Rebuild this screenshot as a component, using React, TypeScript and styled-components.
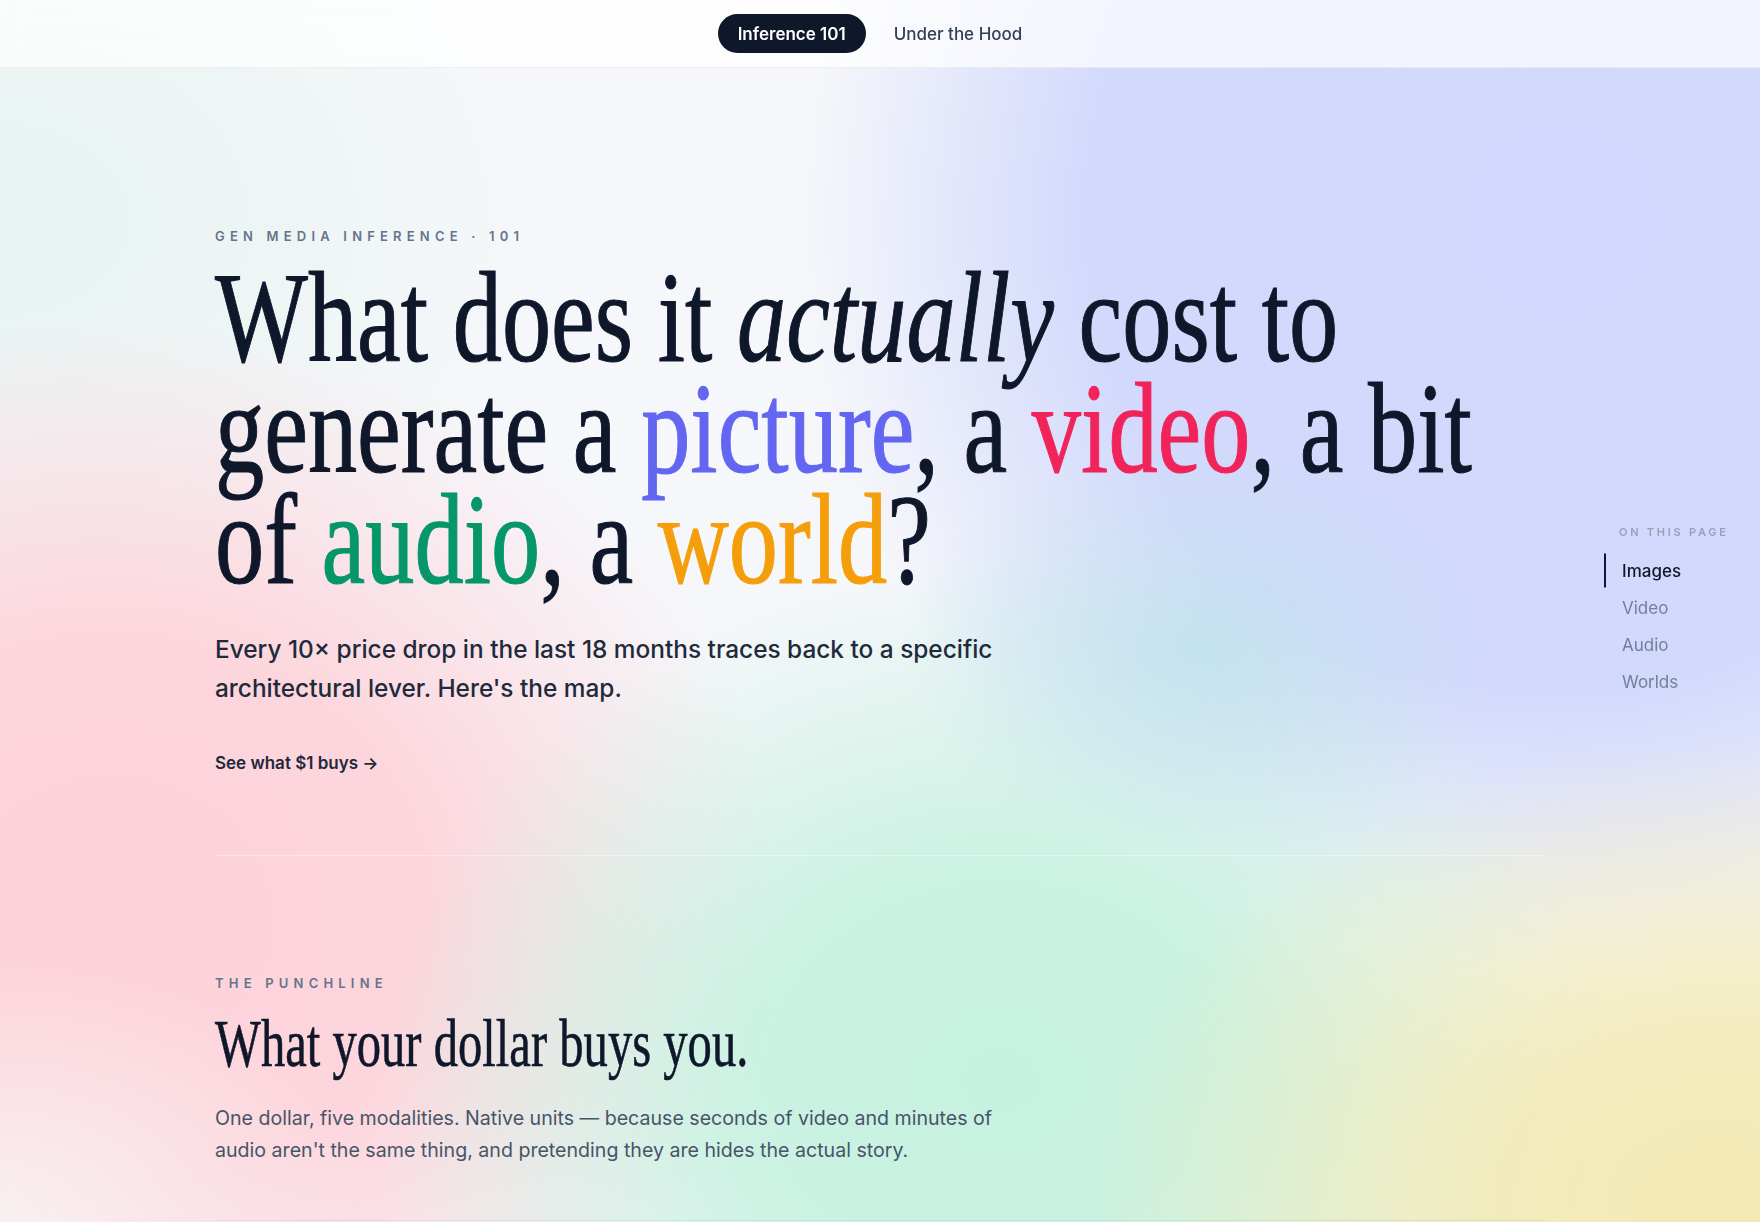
import React from "react";
import styled, { createGlobalStyle } from "styled-components";

const GlobalStyle = createGlobalStyle`
  html, body {
    margin: 0;
    padding: 0;
  }
  body {
    min-height: 100vh;
    overflow-x: hidden;
    font-family: Inter, "Noto Sans", sans-serif;
    color: #0f172a;
    background-color: #f6f7fa;
    background-attachment: fixed;
    background-image:
      radial-gradient(ellipse 380px 260px at 0px 1222px, rgba(248, 242, 242, 0.95) 0%, rgba(248, 242, 242, 0) 100%),
      radial-gradient(ellipse 300px 210px at 1200px 650px, rgba(192, 226, 238, 0.85) 0%, rgba(192, 226, 238, 0) 100%),
      radial-gradient(ellipse 640px 460px at 1720px 1200px, #f3eab3 0%, rgba(243, 234, 179, 0.85) 35%, rgba(243, 234, 179, 0) 100%),
      radial-gradient(ellipse 620px 520px at 1000px 1080px, #c6f1e0 0%, rgba(198, 241, 224, 0.9) 40%, rgba(198, 241, 224, 0) 100%),
      radial-gradient(ellipse 680px 600px at 110px 920px, #fdd3da 0%, rgba(253, 211, 218, 0.95) 45%, rgba(253, 211, 218, 0) 100%),
      radial-gradient(ellipse 760px 760px at 1560px 220px, #d2d8fd 0%, #d3d9fc 62%, rgba(211, 217, 252, 0) 100%),
      radial-gradient(ellipse 560px 420px at 0px 220px, #e6f3f0 0%, rgba(230, 243, 240, 0) 100%);
  }
`;

const modalities = ["Images", "Video", "Audio", "Worlds"];

const Nav = styled.nav`
  position: sticky;
  top: 0;
  z-index: 5;
  height: 68px;
  box-sizing: border-box;
  display: flex;
  align-items: center;
  justify-content: center;
  gap: 8px;
  background: rgba(255, 255, 255, 0.72);
  backdrop-filter: blur(12px);
  border-bottom: 1px solid rgba(15, 23, 42, 0.06);
`;

const NavPill = styled.a<{ $active?: boolean }>`
  display: inline-flex;
  align-items: center;
  height: 39px;
  padding: 0 20px;
  border-radius: 999px;
  font-size: 17px;
  font-weight: ${(p) => (p.$active ? 600 : 500)};
  color: ${(p) => (p.$active ? "#ffffff" : "#334155")};
  background: ${(p) => (p.$active ? "#0f172a" : "transparent")};
  text-decoration: none;
  cursor: pointer;
`;

const Main = styled.main`
  max-width: 1330px;
  margin: 0 auto;
`;

const Hero = styled.section`
  padding: 158px 0 80px;
  border-bottom: 1px solid rgba(255, 255, 255, 0.4);
`;

const Eyebrow = styled.div`
  font-size: 13px;
  line-height: 20px;
  font-weight: 600;
  letter-spacing: 0.4em;
  text-transform: uppercase;
  color: #64748b;
`;

const Headline = styled.h1`
  margin: 16px 0 0;
  font-family: "Liberation Serif", "Times New Roman", serif;
  font-weight: 400;
  font-size: 130px;
  line-height: 111px;
  color: #0f172a;
  white-space: nowrap;
  -webkit-text-stroke-width: 1.1px;
  transform: scaleX(0.757);
  transform-origin: left top;
`;

const Accent = styled.span<{ $color: string }>`
  color: ${(p) => p.$color};
`;

const Lede = styled.p`
  margin: 35px 0 0;
  max-width: 840px;
  font-size: 24.4px;
  line-height: 38.5px;
  font-weight: 500;
  color: #1f2a3c;
`;

const CtaLink = styled.a`
  display: inline-block;
  margin-top: 44px;
  font-size: 17px;
  line-height: 24px;
  font-weight: 600;
  color: #1e293b;
  text-decoration: none;
`;

const Section = styled.section`
  padding: 117px 0 54px;
  border-bottom: 1px solid rgba(148, 163, 184, 0.14);
`;

const SectionTitle = styled.h2`
  margin: 13px 0 0;
  font-family: "Liberation Serif", "Times New Roman", serif;
  font-weight: 400;
  font-size: 68px;
  line-height: 75px;
  color: #0f172a;
  white-space: nowrap;
  -webkit-text-stroke-width: 0.6px;
  transform: scaleX(0.715);
  transform-origin: left top;
`;

const Body = styled.p`
  margin: 22px 0 0;
  max-width: 800px;
  font-size: 19.6px;
  line-height: 31.5px;
  color: #475569;
`;

const Toc = styled.aside`
  position: fixed;
  top: 50%;
  right: 16px;
  width: 140px;
  transform: translateY(-50%);
  z-index: 4;
`;

const TocHeading = styled.div`
  margin: 0 0 14px 15px;
  font-size: 11px;
  line-height: 16px;
  font-weight: 600;
  letter-spacing: 0.25em;
  color: #94a3b8;
`;

const TocList = styled.ul`
  list-style: none;
  margin: 0;
  padding: 0;
  display: flex;
  flex-direction: column;
  gap: 3px;
`;

const TocItem = styled.li<{ $active?: boolean }>`
  padding: 5px 0 5px 16px;
  border-left: 2px solid ${(p) => (p.$active ? "#0f172a" : "transparent")};
  font-size: 17px;
  line-height: 24px;
  font-weight: ${(p) => (p.$active ? 500 : 400)};
  color: ${(p) => (p.$active ? "#0f172a" : "#718096")};
`;

export default function App() {
  return (
    <>
      <GlobalStyle />
      <Nav>
        <NavPill $active>Inference 101</NavPill>
        <NavPill>Under the Hood</NavPill>
      </Nav>

      <Main>
        <Hero>
          <Eyebrow>Gen Media Inference · 101</Eyebrow>
          <Headline>
            What does it <em>actually</em> cost to
            <br />
            generate a <Accent $color="#6366f1">picture</Accent>, a{" "}
            <Accent $color="#f0245a">video</Accent>, a bit
            <br />
            of <Accent $color="#059669">audio</Accent>, a{" "}
            <Accent $color="#f59e0b">world</Accent>?
          </Headline>
          <Lede>
            Every 10× price drop in the last 18 months traces back to a specific
            architectural lever. Here's the map.
          </Lede>
          <CtaLink href="#punchline">See what $1 buys →</CtaLink>
        </Hero>

        <Section id="punchline">
          <Eyebrow>The Punchline</Eyebrow>
          <SectionTitle>What your dollar buys you.</SectionTitle>
          <Body>
            One dollar, five modalities. Native units — because seconds of video and
            minutes of audio aren't the same thing, and pretending they are hides the
            actual story.
          </Body>
        </Section>
      </Main>

      <Toc>
        <TocHeading>ON THIS PAGE</TocHeading>
        <TocList>
          {modalities.map((m, i) => (
            <TocItem key={m} $active={i === 0}>
              {m}
            </TocItem>
          ))}
        </TocList>
      </Toc>
    </>
  );
}
